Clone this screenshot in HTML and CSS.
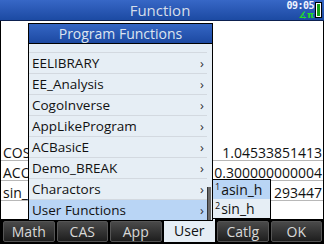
FILE: index.html
```html
<!DOCTYPE html>
<html lang="en">
<head>
  <meta charset="UTF-8">
  <title>Function</title>
  <link rel="stylesheet" href="styles.css">
</head>
<body>
<div class="screen">
  <header class="status">
    <span class="title">Function</span>
    <div class="status-right">
      <div class="clock-col">
        <span class="clock">09:05</span>
        <span class="mode">∡π</span>
      </div>
      <div class="battery"><div class="level"></div></div>
    </div>
  </header>

  <div class="content">
    <!-- history rows behind the popup -->
    <div class="rows">
      <div class="row"><span>COS</span><span>1.04533851413</span></div>
      <div class="row"><span>ACO</span><span>0.300000000004</span></div>
      <div class="row"><span>sin_</span><span>293447</span></div>
    </div>

    <div class="menu">
      <div class="menu-title">Program Functions</div>
      <ul class="menu-list">
        <li>EELIBRARY<span class="arrow">›</span></li>
        <li>EE_Analysis<span class="arrow">›</span></li>
        <li>CogoInverse<span class="arrow">›</span></li>
        <li>AppLikeProgram<span class="arrow">›</span></li>
        <li>ACBasicE<span class="arrow">›</span></li>
        <li>Demo_BREAK<span class="arrow">›</span></li>
        <li>Charactors<span class="arrow">›</span></li>
        <li class="active">User Functions<span class="arrow">›</span></li>
      </ul>
      <div class="scrollbar"></div>
    </div>

    <ul class="submenu">
      <li class="active"><span class="num">1</span>asin_h</li>
      <li><span class="num">2</span>sin_h</li>
    </ul>
  </div>

  <nav class="softkeys">
    <div class="key">Math</div>
    <div class="key">CAS</div>
    <div class="key">App</div>
    <div class="key selected">User</div>
    <div class="key">Catlg</div>
    <div class="key">OK</div>
  </nav>
</div>
</body>
</html>
```

FILE: styles.css
```css
body {
  margin: 0;
  font-family: "Open Sans", "Noto Sans", sans-serif;
  background: #fff;
}
.screen {
  width: 324px;
  height: 244px;
  overflow: hidden;
  display: flex;
  flex-direction: column;
}

/* top status bar */
.status {
  height: 20px;
  background: linear-gradient(#3767c6, #1c4aa3);
  border-bottom: 1px solid #0d2150;
  display: flex;
  align-items: center;
  justify-content: center;
  position: relative;
}
.title {
  color: #d6deea;
  font-size: 15px;
  line-height: 20px;
  margin-left: -4px;
}
.status-right {
  position: absolute;
  right: 2px;
  top: 1px;
  display: flex;
  gap: 1px;
}
.clock-col {
  display: flex;
  flex-direction: column;
  align-items: flex-end;
}
.clock {
  font-family: "DejaVu Sans Mono", monospace;
  font-size: 10px;
  font-weight: bold;
  color: #f0f4ff;
  line-height: 10px;
  letter-spacing: -0.5px;
}
.mode {
  font-family: "DejaVu Sans", sans-serif;
  font-size: 9px;
  font-weight: bold;
  color: #22e022;
  line-height: 9px;
}
.battery {
  width: 7px;
  height: 16px;
  margin-top: 1px;
  border: 1px solid #000;
  background: #fff;
  padding: 1px;
  box-sizing: border-box;
  display: flex;
}
.level {
  flex: 1;
  background: #12a012;
}

/* main area */
.content {
  flex: 1;
  position: relative;
  border-left: 1px solid #000;
  border-right: 1px solid #000;
}
.rows {
  padding-top: 120px;
}
.row {
  height: 19px;
  border-bottom: 1px solid #b8b8b8;
  display: flex;
  justify-content: space-between;
  align-items: flex-end;
  font-size: 14px;
  line-height: 14px;
  padding: 0 1px 0 2px;
  color: #111;
  white-space: nowrap;
}

/* popup menu */
.menu {
  position: absolute;
  left: 27px;
  top: 2px;
  width: 183px;
  border: 1px solid #000;
  background: #e6eef5;
}
.menu-title {
  height: 19px;
  line-height: 19px;
  background: linear-gradient(#3566c4, #1c49a2);
  border-bottom: 1px solid #000;
  color: #dde5f0;
  font-size: 14px;
  text-align: center;
}
.menu-list {
  list-style: none;
  margin: 0 5px 0 0;
  padding: 8px 0 0;
}
.menu-list li {
  height: 20px;
  border-top: 1px solid #d3d9e0;
  display: flex;
  align-items: center;
  justify-content: space-between;
  padding: 0 3px 0 3px;
  font-size: 13.5px;
  color: #111;
}
.menu-list li.active {
  background: #b9d5f5;
}
.arrow {
  font-size: 13px;
  color: #333;
}
.scrollbar {
  position: absolute;
  right: 1px;
  top: 163px;
  width: 3px;
  height: 33px;
  background: #6a6a6a;
  border-left: 1px solid #333;
}

/* sub menu */
.submenu {
  position: absolute;
  left: 211px;
  top: 158px;
  width: 57px;
  margin: 0;
  padding: 0;
  list-style: none;
  border: 1px solid #000;
  background: #e6eef5;
}
.submenu li {
  height: 19px;
  display: flex;
  align-items: center;
  gap: 1px;
  font-size: 14px;
  color: #111;
  padding-left: 2px;
}
.submenu li.active {
  background: #b9d5f5;
}
.num {
  font-size: 9px;
  align-self: flex-start;
  line-height: 14px;
}

/* soft keys */
.softkeys {
  height: 25px;
  background: #000;
  display: grid;
  grid-template-columns: repeat(6, 1fr);
  gap: 2px;
  padding: 2px 2px 3px 3px;
  box-sizing: border-box;
}
.key {
  border-radius: 2px;
  background: linear-gradient(#4a4a4a, #1e1e1e);
  border: 1px solid #555;
  color: #d8d8d8;
  font-size: 14px;
  display: flex;
  align-items: center;
  justify-content: center;
}
.key.selected {
  background: #e6eef5;
  border-color: #e6eef5;
  color: #111;
  margin-top: -3px;
  border-radius: 0;
}
```
